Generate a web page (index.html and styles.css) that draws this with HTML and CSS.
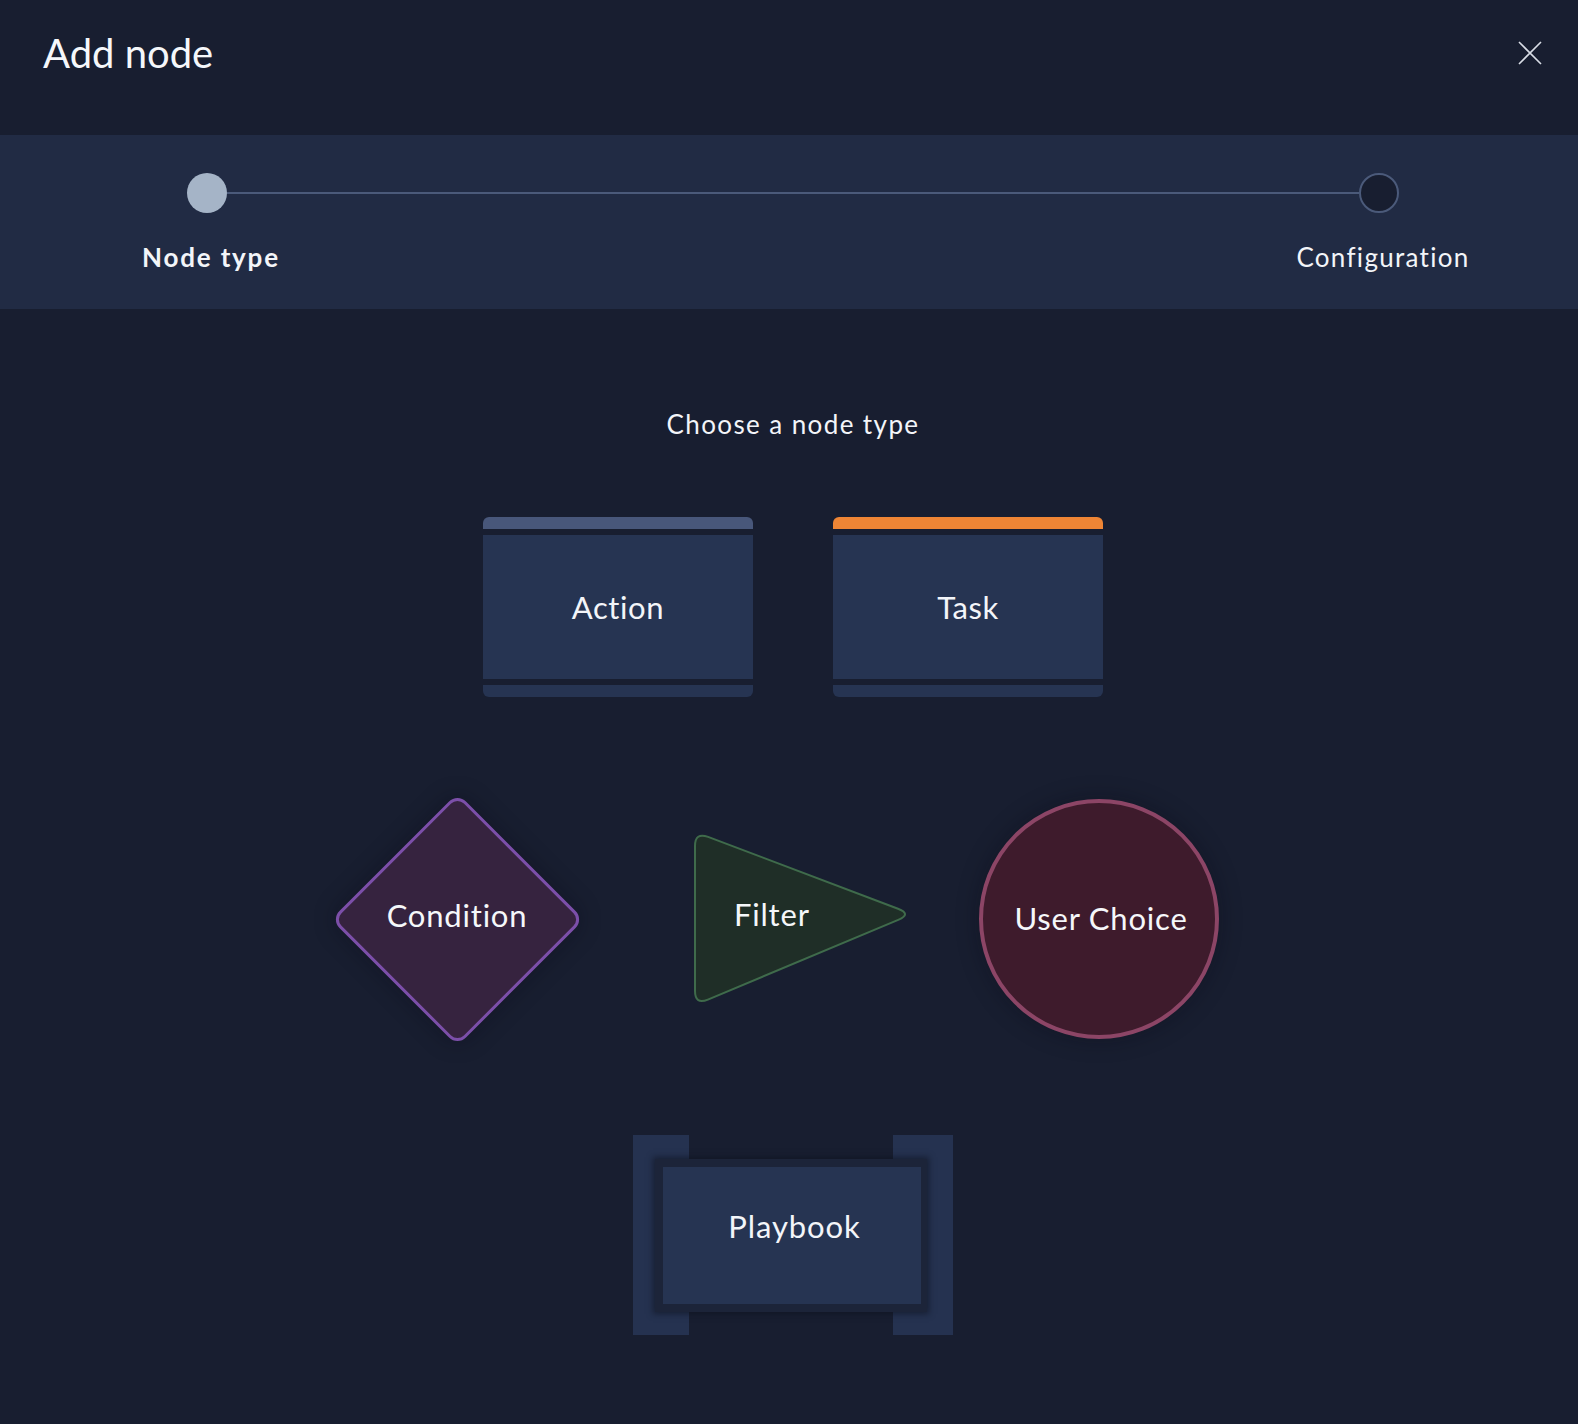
FILE: index.html
```html
<!DOCTYPE html>
<html lang="en">
<head>
<meta charset="utf-8">
<title>Add node</title>
<link rel="stylesheet" href="styles.css">
</head>
<body>
<div class="modal">
  <header class="header">
    <h1 class="title">Add node</h1>
    <button class="close" aria-label="Close">
      <svg width="24" height="24" viewBox="0 0 24 24"><path d="M1 1 L23 23 M23 1 L1 23" stroke="#d9dde6" stroke-width="1.6" fill="none"/></svg>
    </button>
  </header>

  <section class="stepper">
    <div class="track">
      <span class="dot dot-active"></span>
      <span class="line"></span>
      <span class="dot dot-next"></span>
    </div>
    <div class="labels">
      <span class="label label-active">Node type</span>
      <span class="label">Configuration</span>
    </div>
  </section>

  <main class="content">
    <p class="prompt">Choose a node type</p>

    <div class="cards">
      <div class="card">
        <div class="card-top card-top-action"></div>
        <div class="card-body">Action</div>
        <div class="card-bottom"></div>
      </div>
      <div class="card">
        <div class="card-top card-top-task"></div>
        <div class="card-body">Task</div>
        <div class="card-bottom"></div>
      </div>
    </div>

    <div class="shapes">
      <div class="shape condition">
        <div class="diamond"></div>
        <span class="shape-label">Condition</span>
      </div>
      <div class="shape filter">
        <svg width="230" height="190" viewBox="0 0 230 190">
          <path d="M5 19 Q5 5 18.1 9.9 L208 81.7 Q222 87 208.2 92.8 L17.9 172.6 Q5 178 5 164 Z" fill="#1f2e27" stroke="#3f6b4b" stroke-width="2"/>
        </svg>
        <span class="shape-label filter-label">Filter</span>
      </div>
      <div class="shape choice">
        <span class="shape-label">User Choice</span>
      </div>
    </div>

    <div class="playbook">
      <div class="bracket bracket-left"></div>
      <div class="bracket bracket-right"></div>
      <div class="playbook-card">Playbook</div>
    </div>
  </main>
</div>
</body>
</html>
```

FILE: styles.css
```css
html, body {
  margin: 0;
  padding: 0;
  background: #181e30;
  overflow: hidden;
}
body {
  width: 1578px;
  height: 1424px;
  font-family: "Lato", "Noto Sans", sans-serif;
  color: #f3f5f9;
}
.modal {
  width: 1586px;
  display: flex;
  flex-direction: column;
}

/* header */
.header {
  height: 135px;
  box-sizing: border-box;
  display: flex;
  justify-content: space-between;
  align-items: flex-start;
  padding: 29px 44px 0 43px;
}
.title {
  margin: 0;
  font-size: 40px;
  line-height: 48px;
  font-weight: 400;
  color: #f5f7fa;
}
.close {
  margin-top: 12px;
  padding: 0;
  border: 0;
  background: transparent;
  width: 24px;
  height: 24px;
  display: block;
}
.close svg { display: block; }

/* stepper */
.stepper {
  background: #212b44;
  height: 174px;
  box-sizing: border-box;
  padding-top: 38px;
}
.track {
  display: flex;
  align-items: center;
  padding: 0 187px;
}
.dot {
  width: 40px;
  height: 40px;
  border-radius: 50%;
  box-sizing: border-box;
  flex: none;
}
.dot-active { background: #a5b4c7; }
.dot-next {
  background: #181e30;
  border: 2px solid #4b5a7a;
}
.line {
  flex: 1;
  height: 2px;
  background: #4b5a7a;
}
.labels {
  display: flex;
  justify-content: space-between;
  padding: 0 87px;
  margin-top: 28px;
}
.label {
  width: 240px;
  box-sizing: border-box;
  padding-left: 8px;
  text-align: center;
  font-size: 26px;
  line-height: 32px;
  letter-spacing: 1.3px;
  color: #f3f5f9;
}
.label-active {
  font-weight: 700;
  letter-spacing: 1.8px;
}

/* content */
.content {
  display: flex;
  flex-direction: column;
  align-items: center;
}
.prompt {
  margin: 99px 0 0;
  font-size: 26px;
  line-height: 32px;
  letter-spacing: 1.4px;
}

.cards {
  display: flex;
  gap: 80px;
  margin-top: 77px;
}
.card {
  width: 270px;
  display: flex;
  flex-direction: column;
  gap: 6px;
}
.card-top {
  height: 12px;
  border-radius: 6px 6px 0 0;
}
.card-top-action { background: #48577a; }
.card-top-task { background: #ee8535; }
.card-body {
  height: 144px;
  background: #263452;
  display: flex;
  align-items: center;
  justify-content: center;
  font-size: 31px;
  letter-spacing: 0.6px;
}
.card-bottom {
  height: 12px;
  background: #263452;
  border-radius: 0 0 6px 6px;
}

/* shapes row */
.shapes {
  align-self: stretch;
  display: flex;
  align-items: flex-start;
  padding-left: 335px;
  margin-top: 100px;
}
.shape {
  display: grid;
  place-items: center;
}
.shape > * { grid-area: 1 / 1; }
.shape-label {
  position: relative;
  z-index: 1;
  font-size: 31px;
  line-height: 38px;
  letter-spacing: 0.8px;
  color: #f5f7fa;
}
.condition {
  width: 244px;
  height: 244px;
}
.condition .shape-label { margin-bottom: 8px; }
.diamond {
  width: 179px;
  height: 179px;
  box-sizing: border-box;
  background: #36233f;
  border: 3px solid #7c4fa9;
  border-radius: 12px;
  transform: rotate(45deg);
  box-shadow: 0 0 22px rgba(8, 10, 20, 0.35);
}
.filter {
  width: 230px;
  height: 190px;
  margin-left: 111px;
  margin-top: 30px;
  place-items: start;
}
.filter svg { display: block; }
.filter-label {
  margin: 68px 0 0 44px;
}
.choice {
  width: 240px;
  height: 240px;
  margin-left: 59px;
  margin-top: 2px;
  box-sizing: border-box;
  border-radius: 50%;
  background: #3e1b2c;
  border: 4px solid #8c4566;
  box-shadow: 0 0 22px rgba(8, 10, 20, 0.35);
}
.choice .shape-label { padding-left: 4px; margin-top: -2px; }

/* playbook */
.playbook {
  margin-top: 94px;
  width: 320px;
  height: 200px;
  display: grid;
  grid-template-columns: 56px 1fr 60px;
}
.bracket {
  grid-row: 1;
  background: #253250;
}
.bracket-left { grid-column: 1; }
.bracket-right { grid-column: 3; }
.playbook-card {
  grid-row: 1;
  grid-column: 1 / 4;
  align-self: center;
  justify-self: center;
  box-sizing: border-box;
  width: 272px;
  height: 153px;
  background: #263452;
  border: 8px solid #1c2439;
  border-right-width: 6px;
  box-shadow: 0 0 6px 2px rgba(14, 18, 32, 0.6);
  display: flex;
  align-items: center;
  justify-content: center;
  font-size: 31px;
  letter-spacing: 0.9px;
  padding: 0 0 18px 5px;
  margin-left: -4px;
}
```
